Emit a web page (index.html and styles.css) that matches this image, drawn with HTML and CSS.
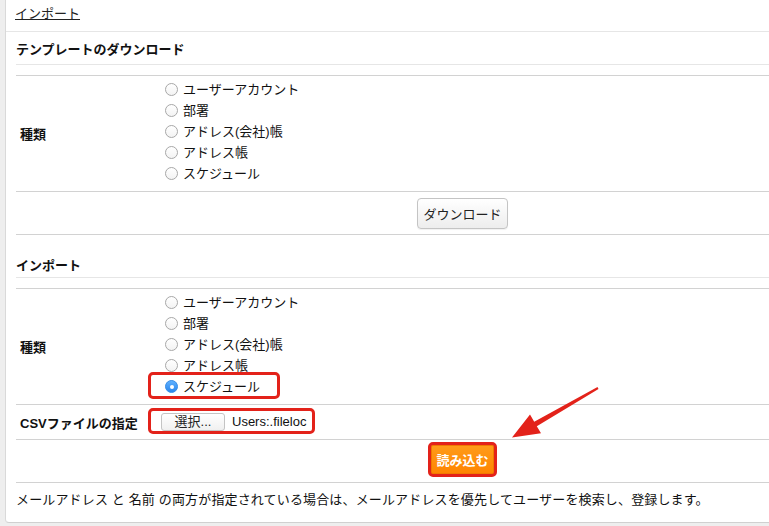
FILE: index.html
```html
<!DOCTYPE html>
<html lang="ja">
<head>
<meta charset="utf-8">
<title>インポート</title>
<link rel="stylesheet" href="styles.css">
</head>
<body>
<div class="panel">
  <div class="crumb"><a href="#">インポート</a></div>
  <div class="content">
    <h2 class="sec-title first">テンプレートのダウンロード</h2>
    <table class="form">
      <tr>
        <th>種類</th>
        <td class="list-cell">
          <ul class="radios">
            <li><span class="radio"></span>ユーザーアカウント</li>
            <li><span class="radio"></span>部署</li>
            <li><span class="radio"></span>アドレス(会社)帳</li>
            <li><span class="radio"></span>アドレス帳</li>
            <li><span class="radio"></span>スケジュール</li>
          </ul>
        </td>
      </tr>
      <tr>
        <th></th>
        <td class="btn-cell"><button class="btn">ダウンロード</button></td>
      </tr>
    </table>

    <h2 class="sec-title">インポート</h2>
    <table class="form">
      <tr>
        <th>種類</th>
        <td class="list-cell">
          <ul class="radios">
            <li><span class="radio"></span>ユーザーアカウント</li>
            <li><span class="radio"></span>部署</li>
            <li><span class="radio"></span>アドレス(会社)帳</li>
            <li><span class="radio"></span>アドレス帳</li>
            <li class="hl hl-radio"><span class="radio checked"></span>スケジュール</li>
          </ul>
        </td>
      </tr>
      <tr>
        <th>CSVファイルの指定</th>
        <td class="file-cell">
          <span class="hl hl-file"><button class="btn-file">選択...</button><span class="file-name">Users:.fileloc</span></span>
        </td>
      </tr>
      <tr>
        <th></th>
        <td class="btn-cell submit-cell"><button class="btn-orange">読み込む</button></td>
      </tr>
    </table>
    <p class="note">メールアドレス と 名前 の両方が指定されている場合は、メールアドレスを優先してユーザーを検索し、登録します。</p>
  </div>
</div>
<svg class="arrow" width="769" height="526" viewBox="0 0 769 526" aria-hidden="true">
  <polygon points="597.5,387 534.2,421.8 530,414.5 512,437.5 541,433.2 536.8,426.2 598.5,389" fill="#e3221a"/>
</svg>
</body>
</html>
```
FILE: styles.css
```css
html, body {
  margin: 0;
  padding: 0;
}
body {
  position: relative;
  background: #eeeeee;
  font-family: "Liberation Sans", "Noto Sans CJK JP", sans-serif;
  font-size: 13px;
  color: #111;
  width: 769px;
  height: 526px;
  overflow: hidden;
}
.panel {
  margin-left: 5px;
  background: #fff;
  border-left: 1px solid #d9d9d9;
  border-bottom: 1px solid #d0d0d0;
  border-bottom-left-radius: 4px;
  height: 523px;
  box-sizing: border-box;
}
.crumb {
  height: 32px;
  box-sizing: border-box;
  border-bottom: 1px solid #e6e6e6;
  padding: 5px 0 0 9px;
  line-height: 18px;
}
.crumb a {
  color: #222;
  text-decoration: underline;
}
.content {
  padding-left: 10px;
}
.sec-title {
  margin: 21px 0 0;
  padding: 0 0 1px 0;
  font-size: 13px;
  font-weight: bold;
  line-height: 20px;
  border-bottom: 1px solid #e6e6e6;
}
.sec-title.first {
  margin-top: 0;
  padding-top: 8px;
  padding-bottom: 4px;
}
.form {
  margin-top: 10px;
  width: 100%;
  border-collapse: collapse;
}
.form tr {
  border-top: 1px solid #d2d2d2;
  border-bottom: 1px solid #d2d2d2;
}
.form th {
  width: 136px;
  text-align: left;
  padding: 0 0 0 4px;
  font-weight: bold;
  vertical-align: middle;
}
.form td {
  padding: 0 0 0 9px;
}
.list-cell {
  padding-top: 3px !important;
  padding-bottom: 7px !important;
}
.radios {
  list-style: none;
  margin: 0;
  padding: 0;
}
.radios li {
  height: 21px;
  line-height: 21px;
  display: flex;
  align-items: center;
}
.radio {
  width: 13px;
  height: 13px;
  box-sizing: border-box;
  border-radius: 50%;
  border: 1px solid #a8a8a8;
  background: linear-gradient(#ffffff, #f3f3f3);
  margin-right: 5px;
  flex: none;
  position: relative;
}
.radio.checked {
  border-color: #3a8ee6;
  background: linear-gradient(#5eb0ff, #2a86ec);
}
.radio.checked::after {
  content: "";
  position: absolute;
  left: 3.5px;
  top: 3.5px;
  width: 4px;
  height: 4px;
  border-radius: 50%;
  background: #fff;
}
.hl {
  position: relative;
}
.hl::before {
  content: "";
  position: absolute;
  border: 3px solid #e3221a;
  border-radius: 5px;
  pointer-events: none;
}
.hl-radio {
  width: max-content;
}
.hl-radio::before {
  left: -17px;
  right: -20px;
  top: -4px;
  bottom: -2px;
}
.btn-cell {
  text-align: center;
  padding-left: 0 !important;
  padding-top: 6px !important;
  padding-bottom: 5px !important;
}
.btn {
  font-family: inherit;
  font-size: 13px;
  color: #222;
  width: 91px;
  height: 31px;
  border: 1px solid #c4c4c4;
  border-radius: 4px;
  background: linear-gradient(#ffffff, #ededed);
  box-shadow: 0 1px 1px rgba(0,0,0,0.06);
  padding: 0;
}
.file-cell {
  height: 34px;
  padding-top: 0 !important;
}
.hl-file {
  display: inline-flex;
  align-items: center;
  margin-left: -4px;
}
.hl-file::before {
  left: -13px;
  right: -9px;
  top: -5px;
  bottom: -3px;
}
.btn-file {
  font-family: inherit;
  font-size: 13px;
  color: #222;
  width: 64px;
  height: 18px;
  line-height: 16px;
  border: 1px solid #c4c4c4;
  border-radius: 3px;
  background: linear-gradient(#ffffff, #f0f0f0);
  padding: 0;
  margin-right: 7px;
}
.file-name {
  line-height: 18px;
}
.submit-cell {
  padding-top: 2px !important;
  padding-bottom: 5px !important;
}
.btn-orange {
  font-family: inherit;
  font-size: 13px;
  font-weight: bold;
  color: #fff;
  width: 69px;
  height: 35px;
  border: 3px solid #e3221a;
  border-radius: 5px;
  background: linear-gradient(#ff9c1a, #ff8400);
  box-shadow: inset 0 0 0 1px #f07a00;
  padding: 0;
}
.note {
  margin: 0;
  padding: 7px 0 0 0;
  line-height: 20px;
  color: #111;
  letter-spacing: 0.15px;
}
.arrow {
  position: absolute;
  left: 0;
  top: 0;
  pointer-events: none;
}
```
